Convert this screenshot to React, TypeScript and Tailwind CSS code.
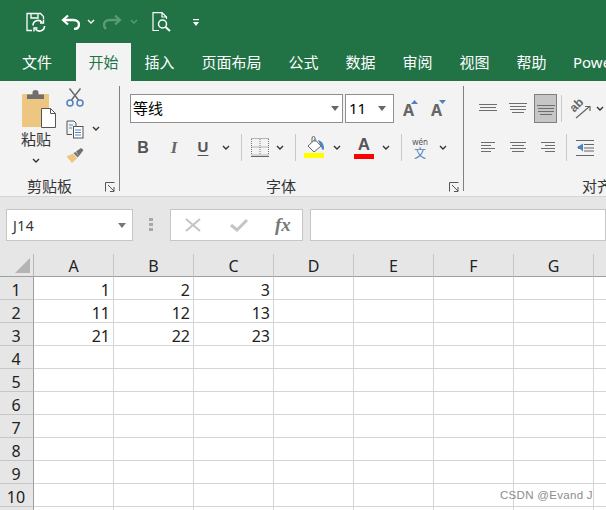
import React from "react";

const Chev = ({ c = "#444", className = "" }: { c?: string; className?: string }) => (
  <svg width="12" height="6" viewBox="0 0 12 6" className={"shrink-0 " + className}>
    <path d="M3 1 L6 4 L9 1" fill="none" stroke={c} strokeWidth="1.4" />
  </svg>
);

const Launcher = ({ className = "" }: { className?: string }) => (
  <svg width="10" height="10" viewBox="0 0 10 10" className={"shrink-0 " + className}>
    <path d="M0.5 9.5V0.5H9.5M3 3L9 9M9 5V9.5H5" fill="none" stroke="#555" strokeWidth="1" />
  </svg>
);

const Lines = ({ rows, w = 18 }: { rows: [number, number, number][]; w?: number }) => (
  <svg width={w} height="16" viewBox={`0 0 ${w} 16`}>
    {rows.map(([y, x1, x2], i) => (
      <rect key={i} x={x1} y={y} width={x2 - x1} height="1" fill="#6e6e6e" />
    ))}
  </svg>
);

const Tab = ({ t, active }: { t: string; active?: boolean }) => (
  <div
    className={
      active
        ? "w-[55px] shrink-0 h-full flex items-center justify-center bg-[#f3f3f3] text-[#217346]"
        : "w-[55px] shrink-0 h-full flex items-center justify-center text-white"
    }
  >
    {t}
  </div>
);

const Sep = ({ className = "" }: { className?: string }) => (
  <div className={"w-px h-[27px] bg-[#c9c9c9] shrink-0 " + className} />
);

const cols = ["A", "B", "C", "D", "E", "F", "G", "H"];
const data: Record<number, string[]> = {
  1: ["1", "2", "3"],
  2: ["11", "12", "13"],
  3: ["21", "22", "23"],
};
const rowsN = [1, 2, 3, 4, 5, 6, 7, 8, 9, 10, 11];
const CJK = "font-['Noto_Sans','Noto_Sans_CJK_SC',sans-serif]";

export default function App() {
  return (
    <div className={"relative w-[606px] h-[510px] overflow-hidden bg-white " + CJK}>
      {/* Title bar */}
      <div className="h-[43px] bg-[#217346] flex items-center pl-[26px] pt-[1px]">
        <svg width="20" height="20" viewBox="0 0 20 20" fill="none" stroke="#fff" strokeWidth="1.3">
          <path d="M6 18.5H1V1.5H14.5L17.5 4.5V7" />
          <path d="M5 1.5V6H12V1.5" />
          <path d="M7 13.5a5 5 0 0 1 9-3" strokeWidth="1.6" />
          <path d="M17.5 7.5V11H14" strokeWidth="1.4" />
          <path d="M18.5 14a5 5 0 0 1-9 3" strokeWidth="1.6" />
          <path d="M8 19.5V16H11.5" strokeWidth="1.4" />
        </svg>
        <svg width="19" height="16" viewBox="0 0 19 16" fill="none" stroke="#fff" strokeWidth="2.4" className="ml-[15px]">
          <path d="M7 1.5L2 6L7 10.5" strokeWidth="2.2" />
          <path d="M2 6H12.5C16 6 18 8 18 10.5C18 13 16.5 15 13 15" />
        </svg>
        <Chev c="#fff" className="ml-[5px]" />
        <svg width="19" height="16" viewBox="0 0 19 16" fill="none" stroke="#5d9a7a" strokeWidth="2.4" className="ml-[6px]">
          <path d="M12 1.5L17 6L12 10.5" strokeWidth="2.2" />
          <path d="M17 6H6.5C3 6 1 8 1 10.5C1 13 2 14 3 15" />
        </svg>
        <Chev c="#5d9a7a" className="ml-[6px]" />
        <svg width="19" height="20" viewBox="0 0 19 20" fill="none" stroke="#fff" strokeWidth="1.2" className="ml-[12px]">
          <path d="M7 18.5H1V0.6H10L14.5 5V7M10 0.6V5H14.5" />
          <circle cx="10.5" cy="12" r="4" strokeWidth="1.5" />
          <path d="M13.5 15L18 19" strokeWidth="2" />
        </svg>
        <svg width="8" height="8" viewBox="0 0 8 8" className="ml-[21px] mt-[2px]">
          <rect x="1" y="0" width="6" height="1.2" fill="#fff" />
          <path d="M1 3H7L4 7Z" fill="#fff" />
        </svg>
      </div>

      {/* Tabs */}
      <div className="h-[38px] w-[606px] overflow-hidden bg-[#217346] flex items-stretch text-[15px] whitespace-nowrap">
        <div className="w-[75px] shrink-0 pl-[22px] flex items-center text-white">文件</div>
        <div className="ml-[1px] shrink-0 flex items-stretch"><Tab t="开始" active /></div>
        <div className="ml-[1px] flex items-stretch gap-[2px] shrink-0">
          <Tab t="插入" />
          <div className="w-[85px] shrink-0 flex items-center justify-center text-white">页面布局</div>
          <Tab t="公式" />
          <Tab t="数据" />
          <Tab t="审阅" />
          <Tab t="视图" />
          <Tab t="帮助" />
          <div className="pl-[12px] shrink-0 flex items-center text-white">Power Pivot</div>
        </div>
      </div>

      {/* Ribbon */}
      <div className="h-[116px] bg-[#f3f3f3] border-b border-[#d5d5d5] flex text-[#333]">
        {/* Clipboard */}
        <div className="w-[119px] shrink-0 flex flex-col">
          <div className="flex h-[93px] pl-[18px] pt-[7px]">
            <div className="w-[36px] flex flex-col items-center">
              <svg width="37" height="40" viewBox="0 0 37 40" className="self-start ml-[2px] shrink-0">
                <rect x="2" y="6" width="27" height="33" rx="1" fill="#edc781" />
                <path d="M7 11V6.5H12.5V4.5C12.5 3 13.5 2 15.5 2C17.5 2 18.5 3 18.5 4.5V6.5H24V11Z" fill="#6f6f6f" />
                <path d="M21.5 20.5H30.5L35.5 25.5V39.5H21.5Z" fill="#fff" stroke="#555" strokeWidth="1" />
                <path d="M30.5 20.5V25.5H35.5" fill="none" stroke="#555" strokeWidth="1" />
              </svg>
              <div className="text-[15px] leading-[20px] mt-[1px] whitespace-nowrap">粘贴</div>
              <Chev c="#333" className="mt-[9px]" />
            </div>
            <div className="ml-[12px] w-[18px] flex flex-col items-center">
              <svg width="18" height="19" viewBox="0 0 18 19" fill="none">
                <path d="M3.5 0.5L12.5 12M14.5 0.5L5.5 12" stroke="#666" strokeWidth="1.4" />
                <circle cx="4" cy="15" r="3" stroke="#4f83c0" strokeWidth="1.5" />
                <circle cx="14" cy="15" r="3" stroke="#4f83c0" strokeWidth="1.5" />
              </svg>
              <svg width="18" height="19" viewBox="0 0 18 19" fill="none" className="mt-[13px]">
                <path d="M6 14.5H1V1H8L10 3V6" stroke="#555" />
                <rect x="7.5" y="6.5" width="9.5" height="11.5" fill="#fff" stroke="#555" />
                <path d="M9 10H15M9 12.5H15M9 15H15" stroke="#4f83c0" />
                <path d="M3 5H7M3 8H6" stroke="#4f83c0" />
              </svg>
              <svg width="18" height="15" viewBox="0 0 18 15" className="mt-[9px]">
                <path d="M0.5 8.5L7 5.5L11 10.5L6 15Z" fill="#edc781" />
                <path d="M7.5 5L11.5 9.5L13 8L9.5 4Z" fill="#6f6f6f" />
                <path d="M10 3.5L15 0L17.5 2L13 8Z" fill="#6f6f6f" />
              </svg>
            </div>
            <Chev c="#333" className="ml-[6px] mt-[38px]" />
          </div>
          <div className="flex items-center pl-[27px] h-[20px] mt-[2px]">
            <span className="w-[55px] text-[15px] leading-[20px] whitespace-nowrap">剪贴板</span>
            <Launcher className="ml-[23px] mt-[1px]" />
          </div>
        </div>
        <div className="w-px my-[5px] bg-[#808080] shrink-0" />

        {/* Font */}
        <div className="w-[343px] shrink-0 flex flex-col">
          <div className="flex items-center h-[29px] mt-[13px] pl-[10px]">
            <div className="w-[213px] h-[29px] bg-white border border-[#8f8f8f] flex items-center pl-[2px] text-[15px] text-black">
              <span className="flex-1">等线</span>
              <svg width="8" height="5" viewBox="0 0 8 5" className="mr-[3px]">
                <path d="M0 0H8L4 5Z" fill="#666" />
              </svg>
            </div>
            <div className="ml-[2px] w-[49px] h-[29px] bg-white border border-[#8f8f8f] flex items-center pl-[3px] text-[15px] text-black">
              <span className="flex-1">11</span>
              <svg width="8" height="5" viewBox="0 0 8 5" className="mr-[7px]">
                <path d="M0 0H8L4 5Z" fill="#666" />
              </svg>
            </div>
            <div className="ml-[9px] w-[20px] h-[20px] flex items-end">
              <span className="text-[16px] leading-[18px] font-bold text-[#666]">A</span>
              <svg width="7" height="4" viewBox="0 0 7 4" className="self-start mt-[1px] -ml-[3px]">
                <path d="M0 4H7L3.5 0Z" fill="#4f83c0" />
              </svg>
            </div>
            <div className="ml-[8px] w-[20px] h-[20px] flex items-end">
              <span className="text-[16px] leading-[18px] font-bold text-[#666]">A</span>
              <svg width="7" height="4" viewBox="0 0 7 4" className="self-start mt-[1px] -ml-[3px]">
                <path d="M0 0H7L3.5 4Z" fill="#4f83c0" />
              </svg>
            </div>
          </div>
          <div className="flex items-center h-[27px] mt-[11px] pl-[10px]">
            <span className="w-[26px] text-center text-[16px] font-bold text-[#555] font-['Liberation_Sans',sans-serif]">B</span>
            <span className="ml-[5px] w-[26px] text-center text-[17px] font-bold italic text-[#666] font-['Liberation_Serif',serif]">I</span>
            <span className="ml-[5px] w-[22px] text-center text-[15px] font-bold text-[#555] underline underline-offset-[3px] font-['Liberation_Sans',sans-serif]">U</span>
            <Chev c="#333" className="ml-[6px]" />
            <Sep className="ml-[9px]" />
            <svg width="18" height="20" viewBox="0 0 18 20" className="ml-[9px]" fill="none">
              <path d="M0.5 1V17M9 1V17M17.5 1V17M0.5 0.5H17.5M0.5 9H17.5M0.5 17H17.5" stroke="#777" strokeDasharray="1 1" />
              <path d="M0 18.5H18" stroke="#666" />
            </svg>
            <Chev c="#333" className="ml-[5px]" />
            <Sep className="ml-[9px]" />
            <svg width="21" height="23" viewBox="0 0 21 23" className="ml-[8px]">
              <path d="M4 10L11 3.5L17 10L10 16Z" fill="#fff" stroke="#666" />
              <path d="M8 6V2A1.5 1.5 0 0 1 11 2V6" fill="none" stroke="#666" />
              <path d="M14 4C18 5 20 8 20 13C20 14 18 14 18 13Z" fill="#4f83c0" />
              <rect x="0" y="17" width="20" height="5" fill="#ffff00" />
            </svg>
            <Chev c="#333" className="ml-[6px]" />
            <div className="ml-[11px] w-[20px] h-[23px] flex flex-col items-center">
              <span className="text-[17px] leading-[18px] font-bold text-[#555] font-['Liberation_Sans',sans-serif]">A</span>
              <div className="w-[20px] h-[5px] bg-[#ff0000]" />
            </div>
            <Chev c="#333" className="ml-[6px]" />
            <Sep className="ml-[9px]" />
            <div className="ml-[10px] w-[16px] h-[24px] flex flex-col items-center">
              <span className="text-[8px] leading-[11px] text-[#555]">wén</span>
              <span className="text-[12px] leading-[13px] text-[#4f83c0]">文</span>
            </div>
            <Chev c="#333" className="ml-[9px]" />
          </div>
          <div className="flex-1 flex items-start pt-[15px] pl-[146px]">
            <span className="w-[30px] text-[15px] leading-[20px] whitespace-nowrap">字体</span>
            <Launcher className="ml-[153px] mt-[6px]" />
          </div>
        </div>
        <div className="w-px my-[5px] bg-[#808080] shrink-0" />

        {/* Alignment */}
        <div className="flex-1 flex flex-col overflow-hidden">
          <div className="flex items-center h-[29px] mt-[13px]">
            <div className="ml-[15px] w-[18px] flex"><Lines rows={[[3, 0, 18], [6, 1, 17], [9, 0, 18]]} /></div>
            <div className="ml-[12px] w-[18px] flex"><Lines rows={[[2, 0, 18], [5, 1, 17], [8, 1, 17], [11, 3, 15]]} /></div>
            <div className="ml-[7px] w-[28px] h-[29px] bg-[#c6c6c6] border border-[#7f7f7f] flex items-center justify-center">
              <Lines rows={[[4, 0, 18], [7, 1, 17], [10, 1, 17], [13, 3, 15]]} />
            </div>
            <Sep className="ml-[4px]" />
            <svg width="20" height="20" viewBox="0 0 20 20" className="ml-[9px] shrink-0" fill="none" stroke="#666" strokeWidth="1.2">
              <text x="0" y="10" transform="rotate(-45 6 8)" fontSize="12" fontWeight="700" fill="#666" stroke="none" fontFamily="Liberation Sans, sans-serif">ab</text>
              <path d="M5 19L18 8M14 7.5H19V12" />
            </svg>
            <Chev c="#333" className="ml-[3px]" />
          </div>
          <div className="flex items-center h-[27px] mt-[11px]">
            <div className="ml-[17px] w-[14px] flex"><Lines w={14} rows={[[2, 0, 14], [5, 0, 10], [8, 0, 14], [11, 0, 10]]} /></div>
            <div className="ml-[15px] w-[16px] flex"><Lines w={16} rows={[[2, 0, 16], [5, 2, 14], [8, 0, 16], [11, 2, 14]]} /></div>
            <div className="ml-[15px] w-[14px] flex"><Lines w={14} rows={[[2, 0, 14], [5, 4, 14], [8, 0, 14], [11, 4, 14]]} /></div>
            <Sep className="ml-[11px]" />
            <svg width="18" height="16" viewBox="0 0 18 16" className="ml-[9px]">
              <path d="M0 0.5H18M8 4.5H18M8 8H18M8 11H18M0 15.5H18" stroke="#666" strokeWidth="1" />
              <path d="M7 3.5V11.5L2.5 7.5H0.5V7.5Z" fill="#4f83c0" />
              <rect x="2" y="6" width="5" height="3" fill="#4f83c0" />
            </svg>
          </div>
          <div className="flex-1 pt-[15px] pl-[118px] text-[15px] leading-[20px] whitespace-nowrap">对齐方式</div>
        </div>
      </div>

      {/* Formula bar */}
      <div className="h-[57px] bg-[#e6e6e6] flex pt-[12px] items-start">
        <div className="ml-[6px] w-[127px] h-[32px] bg-white border border-[#c6c6c6] flex items-center pl-[6px] pr-[6px] text-[14px] text-[#333]">
          <span className="flex-1 tracking-[0.5px]">J14</span>
          <svg width="8" height="5" viewBox="0 0 8 5">
            <path d="M0 0H8L4 5Z" fill="#777" />
          </svg>
        </div>
        <div className="ml-[16px] mt-[9px] w-[4px] flex flex-col gap-[2px]">
          <div className="h-[3px] bg-[#a8a8a8]" />
          <div className="h-[3px] bg-[#a8a8a8]" />
          <div className="h-[3px] bg-[#a8a8a8]" />
        </div>
        <div className="ml-[17px] w-[133px] h-[32px] bg-white border border-[#c6c6c6] flex items-center">
          <svg width="16" height="14" viewBox="0 0 16 14" className="ml-[14px]" fill="none" stroke="#c4c4c4" strokeWidth="2">
            <path d="M1 1L15 13M15 1L1 13" />
          </svg>
          <svg width="18" height="14" viewBox="0 0 18 14" className="ml-[29px]" fill="none" stroke="#c4c4c4" strokeWidth="3">
            <path d="M1 7L7 12L17 2" />
          </svg>
          <span className="ml-[27px] text-[19px] italic font-bold text-[#777] font-['Liberation_Serif',serif]">fx</span>
        </div>
        <div className="ml-[7px] flex-1 h-[32px] bg-white border border-[#c6c6c6]" />
      </div>

      {/* Grid */}
      <div className="grid grid-cols-[34px_repeat(8,80px)] grid-rows-[23px_repeat(11,23px)] text-[16px] leading-[25px] text-[#222] font-['Noto_Sans',sans-serif]">
        <div className="bg-[#e6e6e6] border-r border-b border-r-[#b8b8b8] border-b-[#9e9e9e] flex items-end justify-end pr-[3px] pb-[3px]">
          <svg width="15" height="15" viewBox="0 0 15 15">
            <path d="M15 0V15H0Z" fill="#b4b4b4" />
          </svg>
        </div>
        {cols.map((c) => (
          <div key={c} className="bg-[#e6e6e6] border-r border-b border-r-[#c6c6c6] border-b-[#9e9e9e] text-center overflow-hidden">
            {c}
          </div>
        ))}
        {rowsN.map((r) => (
          <React.Fragment key={r}>
            <div className="bg-[#e6e6e6] border-r border-b border-r-[#9e9e9e] border-b-[#c6c6c6] text-center pr-[1px] leading-[26px] overflow-hidden">
              {r <= 10 ? r : ""}
            </div>
            {cols.map((c, i) => (
              <div key={c} className="bg-white border-r border-b border-[#d4d4d4] text-right pr-[3px] leading-[26px] overflow-hidden">
                {data[r]?.[i] ?? ""}
              </div>
            ))}
          </React.Fragment>
        ))}
      </div>

      {/* Watermark */}
      <div className="absolute left-[500px] top-[488px] text-[11.5px] leading-[14px] tracking-[0.3px] text-[#8c8c8c] font-['Liberation_Sans',sans-serif] whitespace-nowrap">
        CSDN @Evand J
      </div>
    </div>
  );
}
